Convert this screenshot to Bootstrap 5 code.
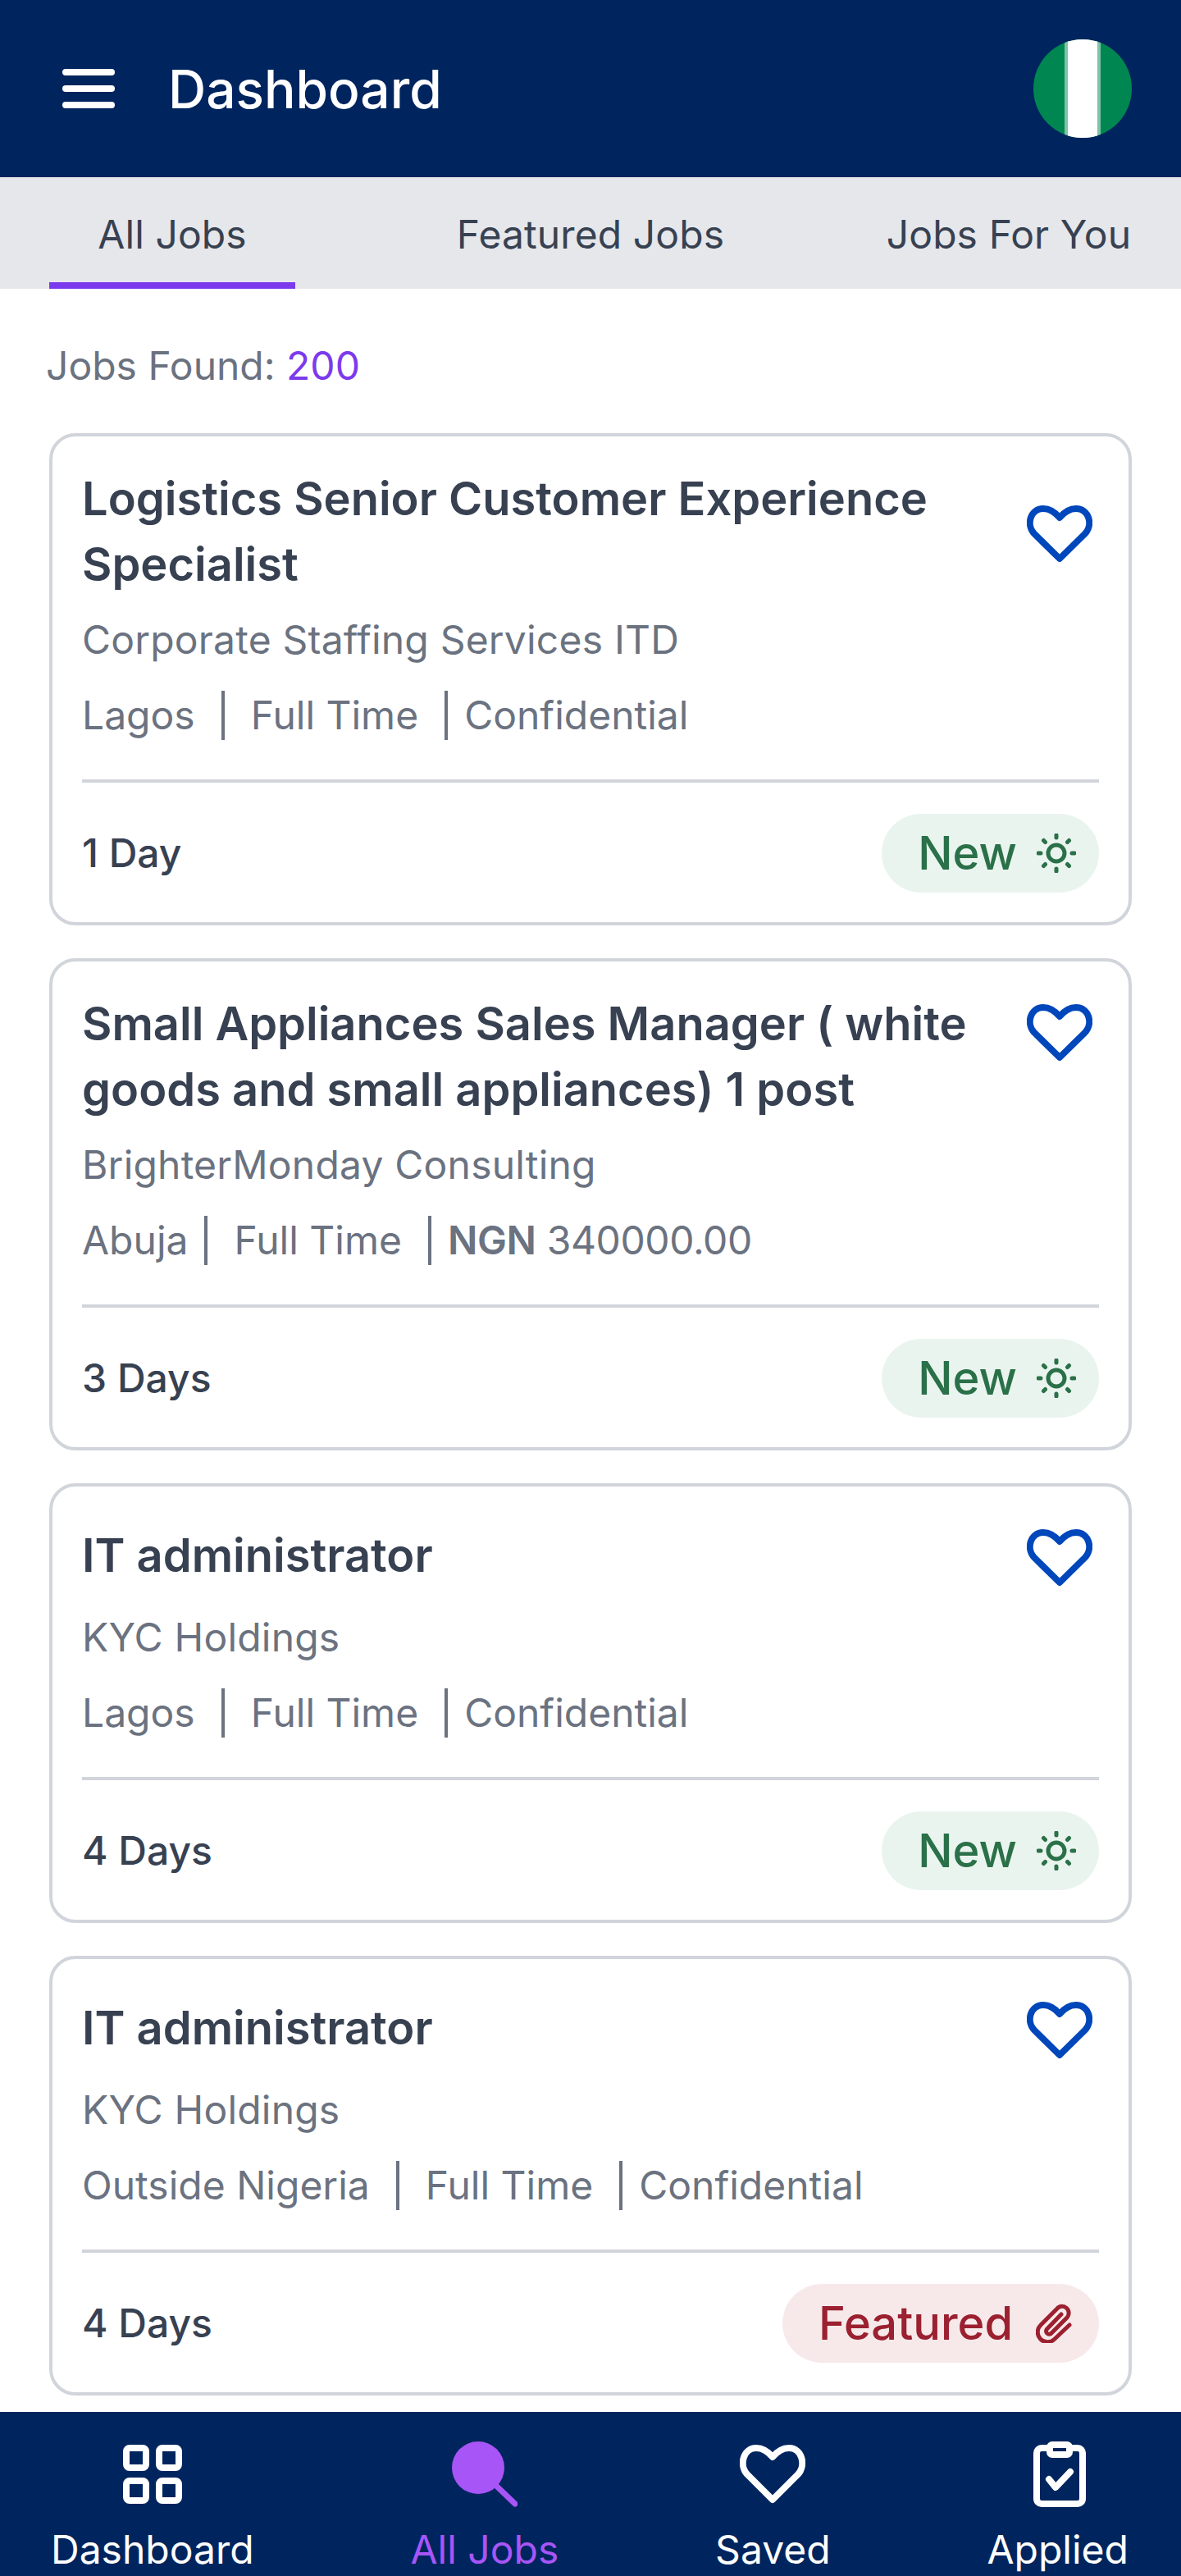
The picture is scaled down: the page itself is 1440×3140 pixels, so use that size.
<!DOCTYPE html>
<html lang="en">
<head>
<meta charset="utf-8">
<title>Dashboard</title>
<link href="https://cdn.jsdelivr.net/npm/bootstrap@5.3.0/dist/css/bootstrap.min.css" rel="stylesheet">
<style>
html,body{height:3140px;margin:0}
body{font-family:Inter,"Liberation Sans",sans-serif;background:#fff;color:#374151;width:1440px;overflow:hidden}
.app-shell{height:3140px}
.top-bar{height:216px;background:#00255e;padding:0 60px 0 76px}
.top-title{font-size:64px;font-weight:500;color:#fff;margin-left:65px;line-height:1;padding-top:2px}
.flag-round{width:120px;height:120px;display:block}
.tab-strip{height:136px;background:#e5e7eb;padding:0 60px}
.tab-item{min-width:300px;height:136px;font-size:48px;color:#374151;text-align:center;line-height:70px;border-bottom:8px solid transparent;font-weight:400;white-space:nowrap;text-decoration:none;display:block;padding-top:35px;letter-spacing:.1px}
.tab-item.is-on{border-bottom-color:#7c3aed}
.found-line{font-size:48px;color:#6b7280;line-height:60px;padding:64px 0 0 56px;margin-bottom:52px}
.found-line span{color:#7c3aed;font-weight:400}
.job-stack{padding:0 60px;gap:40px}
.job-card{border:4px solid #d1d5db;border-radius:32px;padding:36px}
.job-title{font-size:56px;font-weight:600;line-height:80px;color:#374151;margin:0;width:1130px}
.save-btn{width:92px;height:96px;flex:none;margin-right:2px}
.save-btn svg{margin-top:6px}
.co-name{font-size:48px;line-height:60px;color:#6b7280;margin-top:22px;letter-spacing:.2px}
.meta-line{font-size:48px;line-height:60px;color:#6b7280;margin-top:32px}
.meta-line b{font-weight:600}
.pay-val{letter-spacing:-.4px}
.v-rule{display:inline-block;width:4px;height:60px;background:#6b7280}
.rule-a{margin:0 32px}
.rule-b{margin:0 20px 0 32px}
.rule-c{margin:0 32px 0 20px}
.job-rule{height:4px;background:#d1d5db;margin-top:48px}
.job-foot{margin-top:38px;height:96px}
.age-text{font-size:48px;color:#374151;line-height:60px;font-weight:450}
.tag-pill{height:96px;border-radius:48px;font-size:56px;padding:0 28px 0 44px;line-height:1;font-weight:450}
.tag-new{background:#eaf4ef;color:#2a7048}
.tag-feat{background:#f7e9ea;color:#9b2030;padding-right:33px}
.gap-sun{margin-left:24px}
.gap-clip{margin-left:28px}
.bottom-bar{height:200px;background:#00255e;padding:0 64px 0 62px;margin-top:auto}
.bottom-item{color:#fff;font-size:48px;line-height:60px;text-decoration:none;font-weight:400}
.bottom-item.is-on{color:#a855f7}
.bottom-icon{height:80px;margin-top:36px;margin-bottom:22px}
.nudge-right{margin-left:4px}
</style>
</head>
<body>
<div class="app-shell d-flex flex-column">
  <header class="top-bar d-flex align-items-center">
    <svg width="64" height="48" viewBox="0 0 64 48" aria-hidden="true"><rect width="64" height="8" rx="4" fill="#fff"/><rect y="20" width="64" height="8" rx="4" fill="#fff"/><rect y="40" width="64" height="8" rx="4" fill="#fff"/></svg>
    <div class="top-title flex-grow-1">Dashboard</div>
    <svg class="flag-round" viewBox="0 0 120 120" aria-hidden="true"><defs><clipPath id="fc"><circle cx="60" cy="60" r="60"/></clipPath></defs><g clip-path="url(#fc)"><rect width="120" height="120" fill="#008751"/><rect x="38" width="44" height="120" fill="#7fc3a8"/><rect x="42" width="36" height="120" fill="#fff"/></g></svg>
  </header>

  <nav class="tab-strip d-flex justify-content-between">
    <a class="tab-item is-on">All Jobs</a>
    <a class="tab-item">Featured Jobs</a>
    <a class="tab-item">Jobs For You</a>
  </nav>

  <div class="found-line">Jobs Found: <span>200</span></div>

  <div class="job-stack d-flex flex-column">
    <article class="job-card">
      <div class="d-flex justify-content-between align-items-center">
        <h2 class="job-title">Logistics Senior Customer Experience Specialist</h2>
        <div class="save-btn d-flex align-items-center justify-content-center"><svg width="80" height="70" viewBox="0 0 80 70" fill="none" stroke="#0047bb" stroke-width="8" stroke-linejoin="round"><path d="M40 65 9 34.500C-1 24 4 4 20 4c9 0 15 5 20 11C45 9 51 4 60 4c16 0 21 20 11 30.500Z"/></svg></div>
      </div>
      <div class="co-name">Corporate Staffing Services ITD</div>
      <div class="meta-line d-flex align-items-center">Lagos<span class="v-rule rule-a"></span>Full Time<span class="v-rule rule-b"></span>Confidential</div>
      <div class="job-rule"></div>
      <div class="job-foot d-flex justify-content-between align-items-center">
        <div class="age-text">1 Day</div>
        <div class="tag-pill tag-new d-flex align-items-center">New<svg class="gap-sun" width="48" height="48" viewBox="0 0 48 48" fill="none" stroke="#2a7048" stroke-width="5" stroke-linecap="round"><circle cx="24" cy="24" r="10"/><path d="M24 2v3M24 43v3M2 24h3M43 24h3M8.500 8.500l2 2M37.500 37.500l2 2M8.500 39.500l2-2M37.500 10.500l2-2"/></svg></div>
      </div>
    </article>

    <article class="job-card">
      <div class="d-flex justify-content-between align-items-start">
        <h2 class="job-title">Small Appliances Sales Manager ( white goods and small appliances) 1 post</h2>
        <div class="save-btn d-flex align-items-center justify-content-center"><svg width="80" height="70" viewBox="0 0 80 70" fill="none" stroke="#0047bb" stroke-width="8" stroke-linejoin="round"><path d="M40 65 9 34.500C-1 24 4 4 20 4c9 0 15 5 20 11C45 9 51 4 60 4c16 0 21 20 11 30.500Z"/></svg></div>
      </div>
      <div class="co-name">BrighterMonday Consulting</div>
      <div class="meta-line d-flex align-items-center">Abuja<span class="v-rule rule-c"></span>Full Time<span class="v-rule rule-b"></span><span class="pay-val"><b>NGN</b> 340000.00</span></div>
      <div class="job-rule"></div>
      <div class="job-foot d-flex justify-content-between align-items-center">
        <div class="age-text">3 Days</div>
        <div class="tag-pill tag-new d-flex align-items-center">New<svg class="gap-sun" width="48" height="48" viewBox="0 0 48 48" fill="none" stroke="#2a7048" stroke-width="5" stroke-linecap="round"><circle cx="24" cy="24" r="10"/><path d="M24 2v3M24 43v3M2 24h3M43 24h3M8.500 8.500l2 2M37.500 37.500l2 2M8.500 39.500l2-2M37.500 10.500l2-2"/></svg></div>
      </div>
    </article>

    <article class="job-card">
      <div class="d-flex justify-content-between align-items-center">
        <h2 class="job-title">IT administrator</h2>
        <div class="save-btn d-flex align-items-center justify-content-center"><svg width="80" height="70" viewBox="0 0 80 70" fill="none" stroke="#0047bb" stroke-width="8" stroke-linejoin="round"><path d="M40 65 9 34.500C-1 24 4 4 20 4c9 0 15 5 20 11C45 9 51 4 60 4c16 0 21 20 11 30.500Z"/></svg></div>
      </div>
      <div class="co-name">KYC Holdings</div>
      <div class="meta-line d-flex align-items-center">Lagos<span class="v-rule rule-a"></span>Full Time<span class="v-rule rule-b"></span>Confidential</div>
      <div class="job-rule"></div>
      <div class="job-foot d-flex justify-content-between align-items-center">
        <div class="age-text">4 Days</div>
        <div class="tag-pill tag-new d-flex align-items-center">New<svg class="gap-sun" width="48" height="48" viewBox="0 0 48 48" fill="none" stroke="#2a7048" stroke-width="5" stroke-linecap="round"><circle cx="24" cy="24" r="10"/><path d="M24 2v3M24 43v3M2 24h3M43 24h3M8.500 8.500l2 2M37.500 37.500l2 2M8.500 39.500l2-2M37.500 10.500l2-2"/></svg></div>
      </div>
    </article>

    <article class="job-card">
      <div class="d-flex justify-content-between align-items-center">
        <h2 class="job-title">IT administrator</h2>
        <div class="save-btn d-flex align-items-center justify-content-center"><svg width="80" height="70" viewBox="0 0 80 70" fill="none" stroke="#0047bb" stroke-width="8" stroke-linejoin="round"><path d="M40 65 9 34.500C-1 24 4 4 20 4c9 0 15 5 20 11C45 9 51 4 60 4c16 0 21 20 11 30.500Z"/></svg></div>
      </div>
      <div class="co-name">KYC Holdings</div>
      <div class="meta-line d-flex align-items-center">Outside Nigeria<span class="v-rule rule-a"></span>Full Time<span class="v-rule rule-b"></span>Confidential</div>
      <div class="job-rule"></div>
      <div class="job-foot d-flex justify-content-between align-items-center">
        <div class="age-text">4 Days</div>
        <div class="tag-pill tag-feat d-flex align-items-center">Featured<svg class="gap-clip" width="44" height="48" viewBox="0 0 44 48" fill="none" stroke="#9b2030" stroke-width="5" stroke-linecap="round" stroke-linejoin="round"><path d="M41 26 22.500 43.500A11 11 0 0 1 6 26L26 6A8 8 0 0 1 38 17L19 36A3.500 3.500 0 0 1 13.500 31L31 13"/></svg></div>
      </div>
    </article>
  </div>

  <footer class="bottom-bar d-flex justify-content-between">
    <a class="bottom-item d-flex flex-column align-items-center">
      <span class="bottom-icon d-flex align-items-center"><svg width="72" height="72" viewBox="0 0 72 72" fill="none" stroke="#fff" stroke-width="8"><rect x="4" y="4" width="24" height="24" rx="4"/><rect x="44" y="4" width="24" height="24" rx="4"/><rect x="4" y="44" width="24" height="24" rx="4"/><rect x="44" y="44" width="24" height="24" rx="4"/></svg></span>Dashboard</a>
    <a class="bottom-item is-on d-flex flex-column align-items-center">
      <span class="bottom-icon d-flex align-items-center"><svg width="80" height="80" viewBox="0 0 80 80"><circle cx="32" cy="32" r="32" fill="#a855f7"/><path d="M54 54 77 76" stroke="#a855f7" stroke-width="7" stroke-linecap="round"/></svg></span>All Jobs</a>
    <a class="bottom-item d-flex flex-column align-items-center">
      <span class="bottom-icon d-flex align-items-center"><svg width="80" height="72" viewBox="0 0 80 72" fill="none" stroke="#fff" stroke-width="8" stroke-linejoin="round"><path d="M40 67 9 36C-1 25 4 4 20 4c9 0 15 5 20 11C45 9 51 4 60 4c16 0 21 21 11 32Z"/></svg></span>Saved</a>
    <a class="bottom-item d-flex flex-column align-items-center">
      <span class="bottom-icon d-flex align-items-center"><svg class="nudge-right" width="64" height="80" viewBox="0 0 64 80" fill="none" stroke="#fff" stroke-width="8" stroke-linejoin="round" stroke-linecap="round"><path d="M20 8H10a6 6 0 0 0-6 6v56a6 6 0 0 0 6 6h44a6 6 0 0 0 6-6V14a6 6 0 0 0-6-6H44"/><rect x="20" y="4" width="24" height="12" rx="3"/><path d="M19 46l8 10 18-19"/></svg></span>Applied</a>
  </footer>
</div>
<script src="https://cdn.jsdelivr.net/npm/bootstrap@5.3.0/dist/js/bootstrap.bundle.min.js"></script>
</body>
</html>
